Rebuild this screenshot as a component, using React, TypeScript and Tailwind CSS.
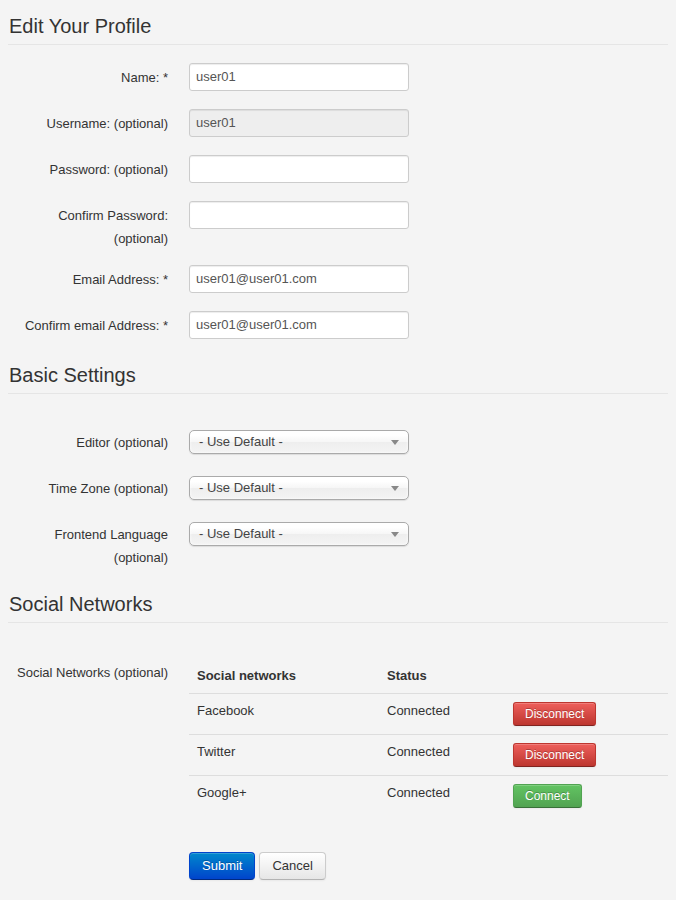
import React from "react";

const lbl = "w-[160px] shrink-0 text-right pt-[3px] leading-[23px] text-[13px] text-[#333]";

function Legend({ children, className = "" }: { children: React.ReactNode; className?: string }) {
  return (
    <div className={`text-[20px] leading-[36px] text-[#333] border-b border-[#e5e5e5] ${className}`}>
      <span className="pl-[1px]">{children}</span>
    </div>
  );
}

function TextRow({ label, value, disabled, mb }: { label: React.ReactNode; value?: string; disabled?: boolean; mb: string }) {
  return (
    <div className={`flex items-start ${mb}`}>
      <div className={lbl}>{label}</div>
      <div className="ml-[21px]">
        <div
          className={`w-[220px] h-[28px] rounded-[3px] border border-[#ccc] px-[6px] text-[13px] leading-[26px] text-[#555] shadow-[inset_0_1px_1px_rgba(0,0,0,0.075)] ${disabled ? "bg-[#eee]" : "bg-white"}`}
        >
          {value}
        </div>
      </div>
    </div>
  );
}

function SelectRow({ label, mb }: { label: React.ReactNode; mb: string }) {
  return (
    <div className={`flex items-start ${mb}`}>
      <div className={lbl}>{label}</div>
      <div className="ml-[21px] h-[28px] flex items-center">
        <div className="relative w-[220px] h-[24px] rounded-[5px] border border-[#aaa] bg-[linear-gradient(to_bottom,#ffffff_20%,#f6f6f6_50%,#eeeeee_52%,#f4f4f4_100%)] shadow-[inset_0_0_3px_#fff,0_1px_1px_rgba(0,0,0,0.1)] pl-[9px] text-[13px] leading-[22px] text-[#444]">
          - Use Default -
          <span className="absolute right-[9px] top-[9px] w-0 h-0 border-l-[4px] border-r-[4px] border-t-[5px] border-l-transparent border-r-transparent border-t-[#888]" />
        </div>
      </div>
    </div>
  );
}

function SmallBtn({ kind, children }: { kind: "danger" | "success"; children: React.ReactNode }) {
  const cls =
    kind === "danger"
      ? "bg-[linear-gradient(to_bottom,#ee5f5b,#bd362f)] border-[#bd362f] border-b-[#802420]"
      : "bg-[linear-gradient(to_bottom,#62c462,#51a351)] border-[#51a351] border-b-[#387038]";
  return (
    <span
      className={`inline-block h-[24px] px-[11px] rounded-[3px] border text-[12px] leading-[22px] text-white shadow-[inset_0_1px_0_rgba(255,255,255,0.2),0_1px_2px_rgba(0,0,0,0.05)] [text-shadow:0_-1px_0_rgba(0,0,0,0.25)] ${cls}`}
    >
      {children}
    </span>
  );
}

const rows = [
  { name: "Facebook", kind: "danger" as const, btn: "Disconnect", cls: "h-[41px] border-b border-[#ddd]" },
  { name: "Twitter", kind: "danger" as const, btn: "Disconnect", cls: "h-[41px] border-b border-[#ddd]" },
  { name: "Google+", kind: "success" as const, btn: "Connect", cls: "h-[40px]" },
];

export default function App() {
  return (
    <div className="min-h-[900px] bg-[#f4f4f4] px-[8px] pt-[8px] font-['Liberation_Sans',Arial,Helvetica,sans-serif] text-[#333]">
      <Legend>Edit Your Profile</Legend>
      <div className="pt-[18px]">
        <TextRow label="Name: *" value="user01" mb="mb-[18px]" />
        <TextRow label="Username: (optional)" value="user01" disabled mb="mb-[18px]" />
        <TextRow label="Password: (optional)" mb="mb-[18px]" />
        <TextRow
          label={
            <>
              Confirm Password:
              <br />
              (optional)
            </>
          }
          mb="mb-[15px]"
        />
        <TextRow label="Email Address: *" value="user01@user01.com" mb="mb-[18px]" />
        <TextRow label="Confirm email Address: *" value="user01@user01.com" mb="mb-0" />
      </div>

      <Legend className="mt-[18px]">Basic Settings</Legend>
      <div className="pt-[34px]">
        <SelectRow label="Editor (optional)" mb="mb-[18px]" />
        <SelectRow label="Time Zone (optional)" mb="mb-[18px]" />
        <SelectRow
          label={
            <>
              Frontend Language
              <br />
              (optional)
            </>
          }
          mb="mb-0"
        />
      </div>

      <Legend className="mt-[17px]">Social Networks</Legend>
      <div className="pt-[35px] flex items-start">
        <div className={lbl}>Social Networks (optional)</div>
        <div className="ml-[21px] w-[480px] text-[13px]">
          <div className="flex h-[36px] border-b border-[#ddd] pt-[9px] leading-[18px] font-bold">
            <div className="w-[190px] pl-[8px]">Social networks</div>
            <div className="w-[126px] pl-[8px]">Status</div>
            <div className="flex-1" />
          </div>
          {rows.map((r) => (
            <div key={r.name} className={`flex pt-[8px] leading-[18px] ${r.cls}`}>
              <div className="w-[190px] pl-[8px]">{r.name}</div>
              <div className="w-[126px] pl-[8px]">Connected</div>
              <div className="flex-1 pl-[8px]">
                <SmallBtn kind={r.kind}>{r.btn}</SmallBtn>
              </div>
            </div>
          ))}
        </div>
      </div>

      <div className="mt-[36px] ml-[181px] flex gap-[4px]">
        <span className="inline-block h-[28px] px-[12px] rounded-[4px] border border-[#0044cc] border-b-[#002a80] bg-[linear-gradient(to_bottom,#0088cc,#0044cc)] text-[13px] leading-[26px] text-white shadow-[inset_0_1px_0_rgba(255,255,255,0.2),0_1px_2px_rgba(0,0,0,0.05)] [text-shadow:0_-1px_0_rgba(0,0,0,0.25)]">
          Submit
        </span>
        <span className="inline-block h-[28px] px-[12px] rounded-[4px] border border-[#ccc] border-b-[#b3b3b3] bg-[linear-gradient(to_bottom,#ffffff,#e6e6e6)] text-[13px] leading-[26px] text-[#333] shadow-[inset_0_1px_0_rgba(255,255,255,0.2),0_1px_2px_rgba(0,0,0,0.05)]">
          Cancel
        </span>
      </div>
    </div>
  );
}
